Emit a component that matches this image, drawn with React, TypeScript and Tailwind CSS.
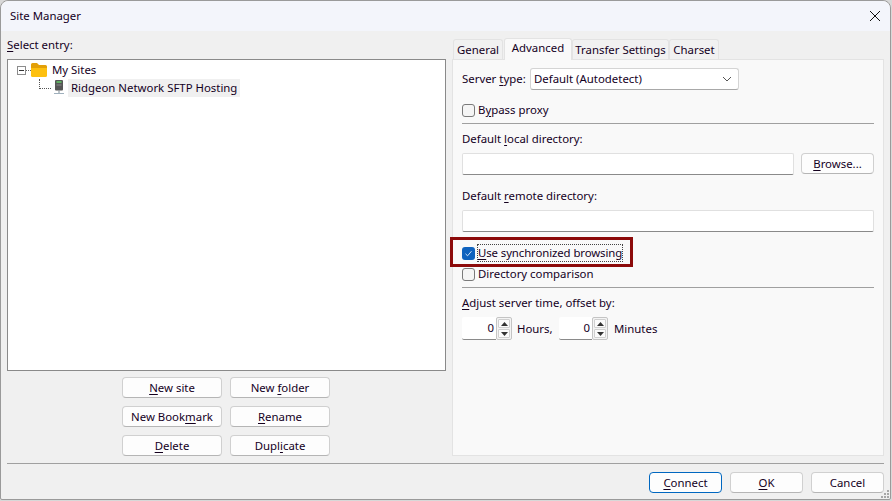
import React from 'react';

const U = ({ children }: { children: React.ReactNode }) => <span className="underline underline-offset-2">{children}</span>;

const Btn = ({ children, className = '', focused = false }: { children: React.ReactNode; className?: string; focused?: boolean }) => (
  <div
    className={`flex h-[21px] items-center justify-center rounded-[4px] border bg-[#fdfdfd] text-[#14001e] ${
      focused ? 'border-[#0067c0]' : 'border-[#d0d0d0] border-b-[#b5b5b5]'
    } ${className}`}
  >
    <span>{children}</span>
  </div>
);

const Check = ({ checked = false }: { checked?: boolean }) =>
  checked ? (
    <div className="flex h-[13px] w-[13px] items-center justify-center rounded-[3px] bg-[#0f62be]">
      <svg width="9" height="9" viewBox="0 0 9 9" fill="none" stroke="#cfe2f7" strokeWidth="1">
        <path d="M1.5 4.8 L3.6 6.8 L7.5 2.2" />
      </svg>
    </div>
  ) : (
    <div className="h-[13px] w-[13px] rounded-[3px] border border-[#7a7a7a] bg-[#f5f5f5]" />
  );

const Spin = ({ className = '' }: { className?: string }) => (
  <div className={`flex h-[23px] ${className}`}>
    <div className="flex flex-1 items-center justify-end rounded-l-[2px] border-b border-b-[#8a8a8a] bg-white pr-[2px]">0</div>
    <div className="flex w-[16px] flex-col gap-[1px] rounded-[2px] border border-[#c4c4c4] bg-[#f4f4f4] p-px">
      <div className="flex flex-1 items-center justify-center rounded-[1px] border border-[#d0d0d0] bg-[#fbfbfb]">
        <svg width="7" height="4" viewBox="0 0 7 4"><path d="M3.5 0 L7 4 L0 4 Z" fill="#333" /></svg>
      </div>
      <div className="flex flex-1 items-center justify-center rounded-[1px] border border-[#d0d0d0] bg-[#fbfbfb]">
        <svg width="7" height="4" viewBox="0 0 7 4"><path d="M0 0 L7 0 L3.5 4 Z" fill="#333" /></svg>
      </div>
    </div>
  </div>
);

const Tab = ({ children, active = false, className = '' }: { children: React.ReactNode; active?: boolean; className?: string }) => (
  <div
    className={`flex items-center justify-center whitespace-nowrap rounded-t-[3px] border border-b-0 border-[#e3e3e3] ${
      active ? 'z-10 -mb-px h-[22px] bg-[#f9f9f9] pb-[3px]' : 'h-[20px] bg-[#f1f1f1]'
    } ${className}`}
  >
    {children}
  </div>
);

export default function App() {
  return (
    <div className="relative h-[501px] w-[892px] overflow-hidden bg-[#d8d8d8] font-['Noto_Sans',sans-serif] text-[11.4px] leading-[16px] text-[#14001e]">
      <div className="flex h-[500px] w-[891px] flex-col rounded-t-[8px] rounded-b-[2px] border border-[#9a9a9a] bg-[#f0f0f0]">
        {/* title bar */}
        <div className="flex h-[30px] shrink-0 items-center justify-between rounded-t-[8px] bg-[#f3f5fb] pr-[8px] pl-[9px]">
          <span>Site Manager</span>
          <svg width="12" height="12" viewBox="0 0 12 12" stroke="#111" strokeWidth="1" className="mr-[1px]">
            <path d="M1 1 L11 11 M11 1 L1 11" />
          </svg>
        </div>

        <div className="flex flex-1 gap-[6px] pr-[6px] pl-[6px]">
          {/* left column */}
          <div className="flex w-[439px] flex-col">
            <div className="mt-[6px] mb-[6px] h-[16px]"><U>S</U>elect entry:</div>
            <div className="h-[312px] border border-[#8a8a8a] bg-white pt-px pl-[9px]">
              <div className="flex h-[18px] items-center">
                <div className="flex h-[9px] w-[9px] items-center justify-center border border-[#8c8c8c]">
                  <div className="h-px w-[5px] bg-[#333]" />
                </div>
                <div className="w-[5px] border-t border-dotted border-[#666]" />
                <svg width="16" height="14" viewBox="0 0 16 14">
                  <path d="M0 1.5 Q0 0 1.5 0 L6 0 L8 2 L14.5 2 Q16 2 16 3.5 L16 6 L0 6 Z" fill="#e3a008" />
                  <path d="M0 5 L16 5 L16 12.5 Q16 14 14.5 14 L1.5 14 Q0 14 0 12.5 Z" fill="#fdc010" />
                </svg>
                <span className="ml-[5px]">My Sites</span>
              </div>
              <div className="flex h-[18px] items-center">
                <div className="mb-[9px] ml-[22px] h-[10px] w-[12px] border-b border-l border-dotted border-[#555]" />
                <svg width="12" height="16" viewBox="0 0 12 16" className="ml-[2px]">
                  <rect x="2" y="0" width="8" height="10.5" rx="1" fill="#555" />
                  <rect x="3.5" y="1" width="5" height="2" fill="#5fae62" />
                  <rect x="3.5" y="4.5" width="5" height="1" fill="#8a8a8a" />
                  <rect x="5.5" y="10.5" width="1" height="3" fill="#7f8b94" />
                  <rect x="1" y="13" width="10" height="1" fill="#9fb0bd" />
                </svg>
                <span className="ml-[3px] flex h-[18px] items-center bg-[#f0f0f0] px-[3px]">Ridgeon Network SFTP Hosting</span>
              </div>
            </div>
            <div className="mt-[6px] ml-[115px] grid w-[208px] grid-cols-[100px_100px] gap-x-[8px] gap-y-[8px]">
              <Btn><U>N</U>ew site</Btn>
              <Btn>New <U>f</U>older</Btn>
              <Btn>New Book<U>m</U>ark</Btn>
              <Btn><U>R</U>ename</Btn>
              <Btn><U>D</U>elete</Btn>
              <Btn>Dupl<U>i</U>cate</Btn>
            </div>
          </div>

          {/* right column */}
          <div className="flex w-[432px] flex-col pt-[7px]">
            <div className="flex h-[21px] items-end pl-[1px]">
              <Tab className="w-[50px]">General</Tab>
              <Tab active className="ml-[1px] w-[68px]">Advanced</Tab>
              <Tab className="w-[97px]">Transfer Settings</Tab>
              <Tab className="w-[50px]">Charset</Tab>
            </div>
            <div className="flex h-[397px] flex-col border border-[#e3e3e3] bg-[#f9f9f9] pr-[9px] pl-[9px]">
              <div className="mt-[8px] flex h-[22px] items-center">
                <span className="w-[68px]">Server <U>t</U>ype:</span>
                <div className="flex h-[22px] w-[209px] items-center justify-between rounded-[3px] border border-[#d4d4d4] border-b-[#a8a8a8] bg-white pr-[6px] pl-[3px]">
                  <span>Default (Autodetect)</span>
                  <svg width="10" height="6" viewBox="0 0 10 6" fill="none" stroke="#555"><path d="M1 1 L5 5 L9 1" /></svg>
                </div>
              </div>
              <div className="mt-[12px] flex h-[16px] items-center gap-[3px]">
                <Check />
                <span>B<U>y</U>pass proxy</span>
              </div>
              <div className="mt-[5px] h-px bg-[#a0a0a0]" />
              <div className="mt-[7px] h-[16px]">Default <U>l</U>ocal directory:</div>
              <div className="mt-[6px] flex h-[22px] gap-[7px]">
                <div className="w-[332px] rounded-[2px] border border-[#e0e0e0] border-b-[#8a8a8a] bg-white" />
                <Btn className="w-[73px]"><U>B</U>rowse...</Btn>
              </div>
              <div className="mt-[13px] h-[16px]">Default <U>r</U>emote directory:</div>
              <div className="mt-[6px] h-[22px] rounded-[2px] border border-[#e0e0e0] border-b-[#8a8a8a] bg-white" />
              <div className="mt-[13px] flex h-[16px] items-center gap-[3px]">
                <Check checked />
                <span className="tracking-[-0.1px] outline-1 outline-dotted outline-[#444]"><U>U</U>se synchronized browsing</span>
              </div>
              <div className="mt-[5px] flex h-[16px] items-center gap-[3px]">
                <Check />
                <span>Directory comparison</span>
              </div>
              <div className="mt-[5px] h-px bg-[#a0a0a0]" />
              <div className="mt-[7px] h-[16px]"><U>A</U>djust server time, offset by:</div>
              <div className="mt-[6px] flex h-[23px] items-center">
                <Spin className="w-[50px]" />
                <span className="ml-[5px] w-[42px]">Hours,</span>
                <Spin className="w-[49px]" />
                <span className="ml-[6px]">Minutes</span>
              </div>
            </div>
          </div>
        </div>

        {/* footer */}
        <div className="mx-[6px] mb-[6px] flex flex-col">
          <div className="h-px bg-[#a0a0a0]" />
          <div className="mt-[8px] flex justify-end gap-[8px]">
            <Btn focused className="w-[73px]"><U>C</U>onnect</Btn>
            <Btn className="w-[73px]"><U>O</U>K</Btn>
            <Btn className="w-[73px]">Cancel</Btn>
          </div>
        </div>
      </div>

      {/* resize grip */}
      <svg width="9" height="9" viewBox="0 0 9 9" className="absolute right-[2px] bottom-[2px]" fill="#a8a8a8">
        <rect x="6" y="0" width="2" height="2" />
        <rect x="3" y="3" width="2" height="2" />
        <rect x="6" y="3" width="2" height="2" />
        <rect x="0" y="6" width="2" height="2" />
        <rect x="3" y="6" width="2" height="2" />
        <rect x="6" y="6" width="2" height="2" />
      </svg>

      {/* red annotation */}
      <div className="absolute top-[237px] left-[450px] h-[30px] w-[183px] border-[3px] border-[#8c0a0a]" />
    </div>
  );
}
